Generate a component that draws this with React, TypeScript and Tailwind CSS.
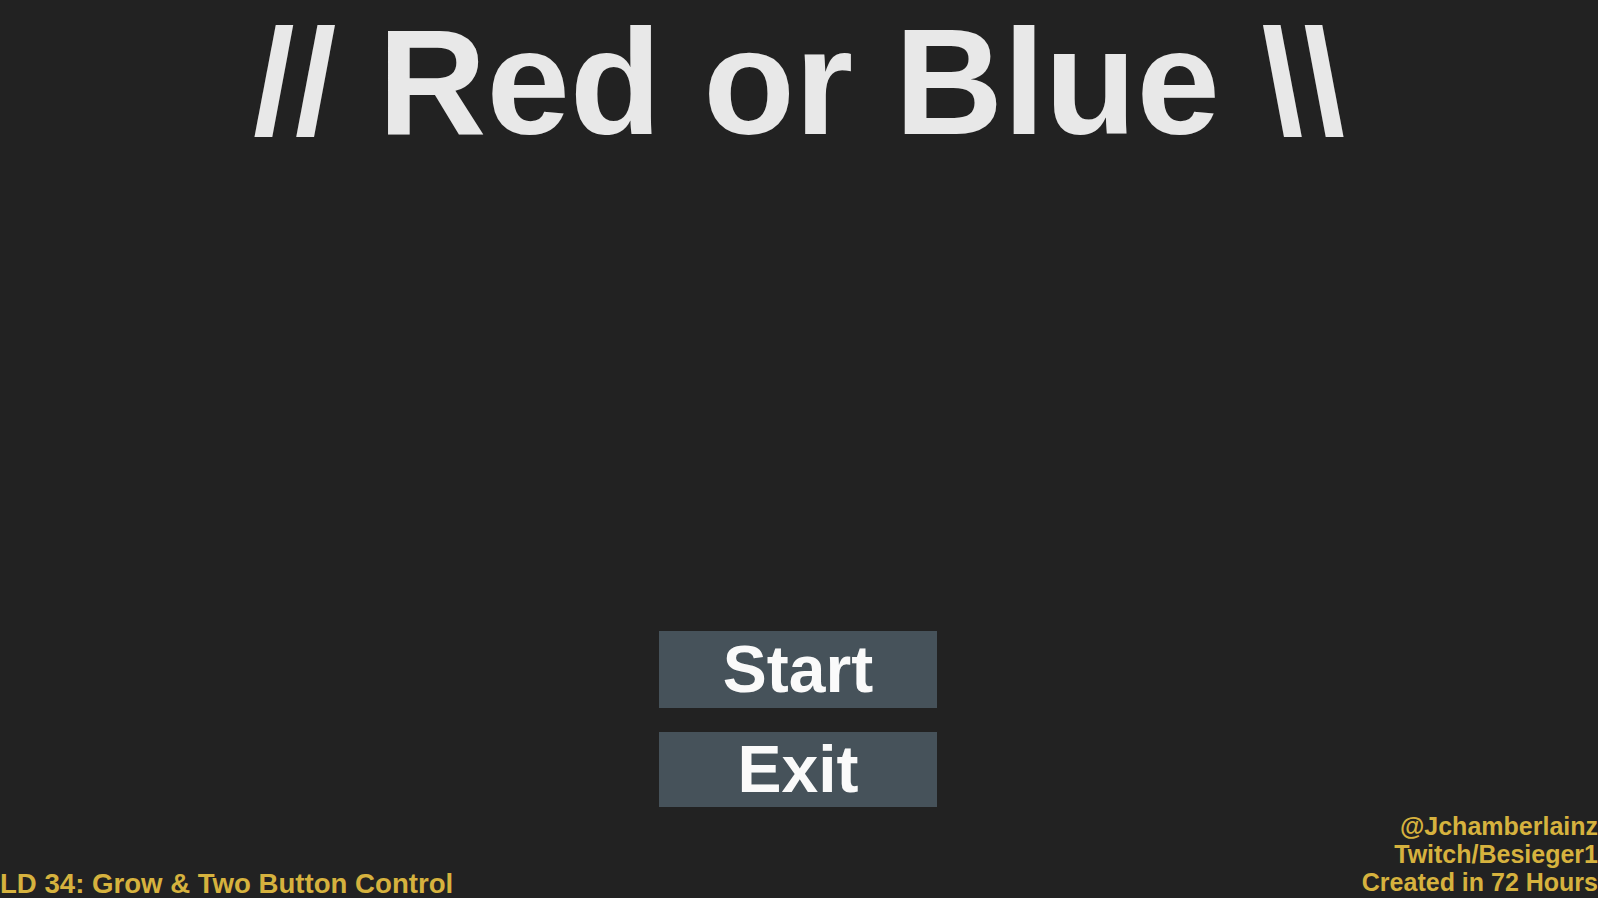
export default function App() {
  return (
    <div
      className="flex h-[898px] w-[1598px] flex-col overflow-hidden bg-[#222222]"
      style={{ fontFamily: '"Liberation Sans", Arial, sans-serif' }}
    >
      <h1 className="pt-[2px] text-center text-[150px] font-bold leading-[160px] whitespace-pre text-[#e8e8e8]">
        {"// Red or Blue \\\\"}
      </h1>

      <div className="mt-[469px] flex flex-col items-center gap-[24px] pr-[2px]">
        <button className="flex h-[77px] w-[278px] items-center justify-center bg-[#46525a] text-[66px] font-bold text-[#fafafa]">
          Start
        </button>
        <button className="flex h-[75px] w-[278px] items-center justify-center bg-[#46525a] text-[66px] font-bold text-[#fafafa]">
          Exit
        </button>
      </div>

      <div className="mt-auto flex items-end justify-between">
        <div className="text-[27.6px] font-bold leading-[28px] text-[#d6b23e]">
          LD 34: Grow &amp; Two Button Control
        </div>
        <div className="pb-[2px] text-right text-[25px] font-bold leading-[28px] text-[#d6b23e]">
          <div>@Jchamberlainz</div>
          <div>Twitch/Besieger1</div>
          <div>Created in 72 Hours</div>
        </div>
      </div>
    </div>
  );
}
